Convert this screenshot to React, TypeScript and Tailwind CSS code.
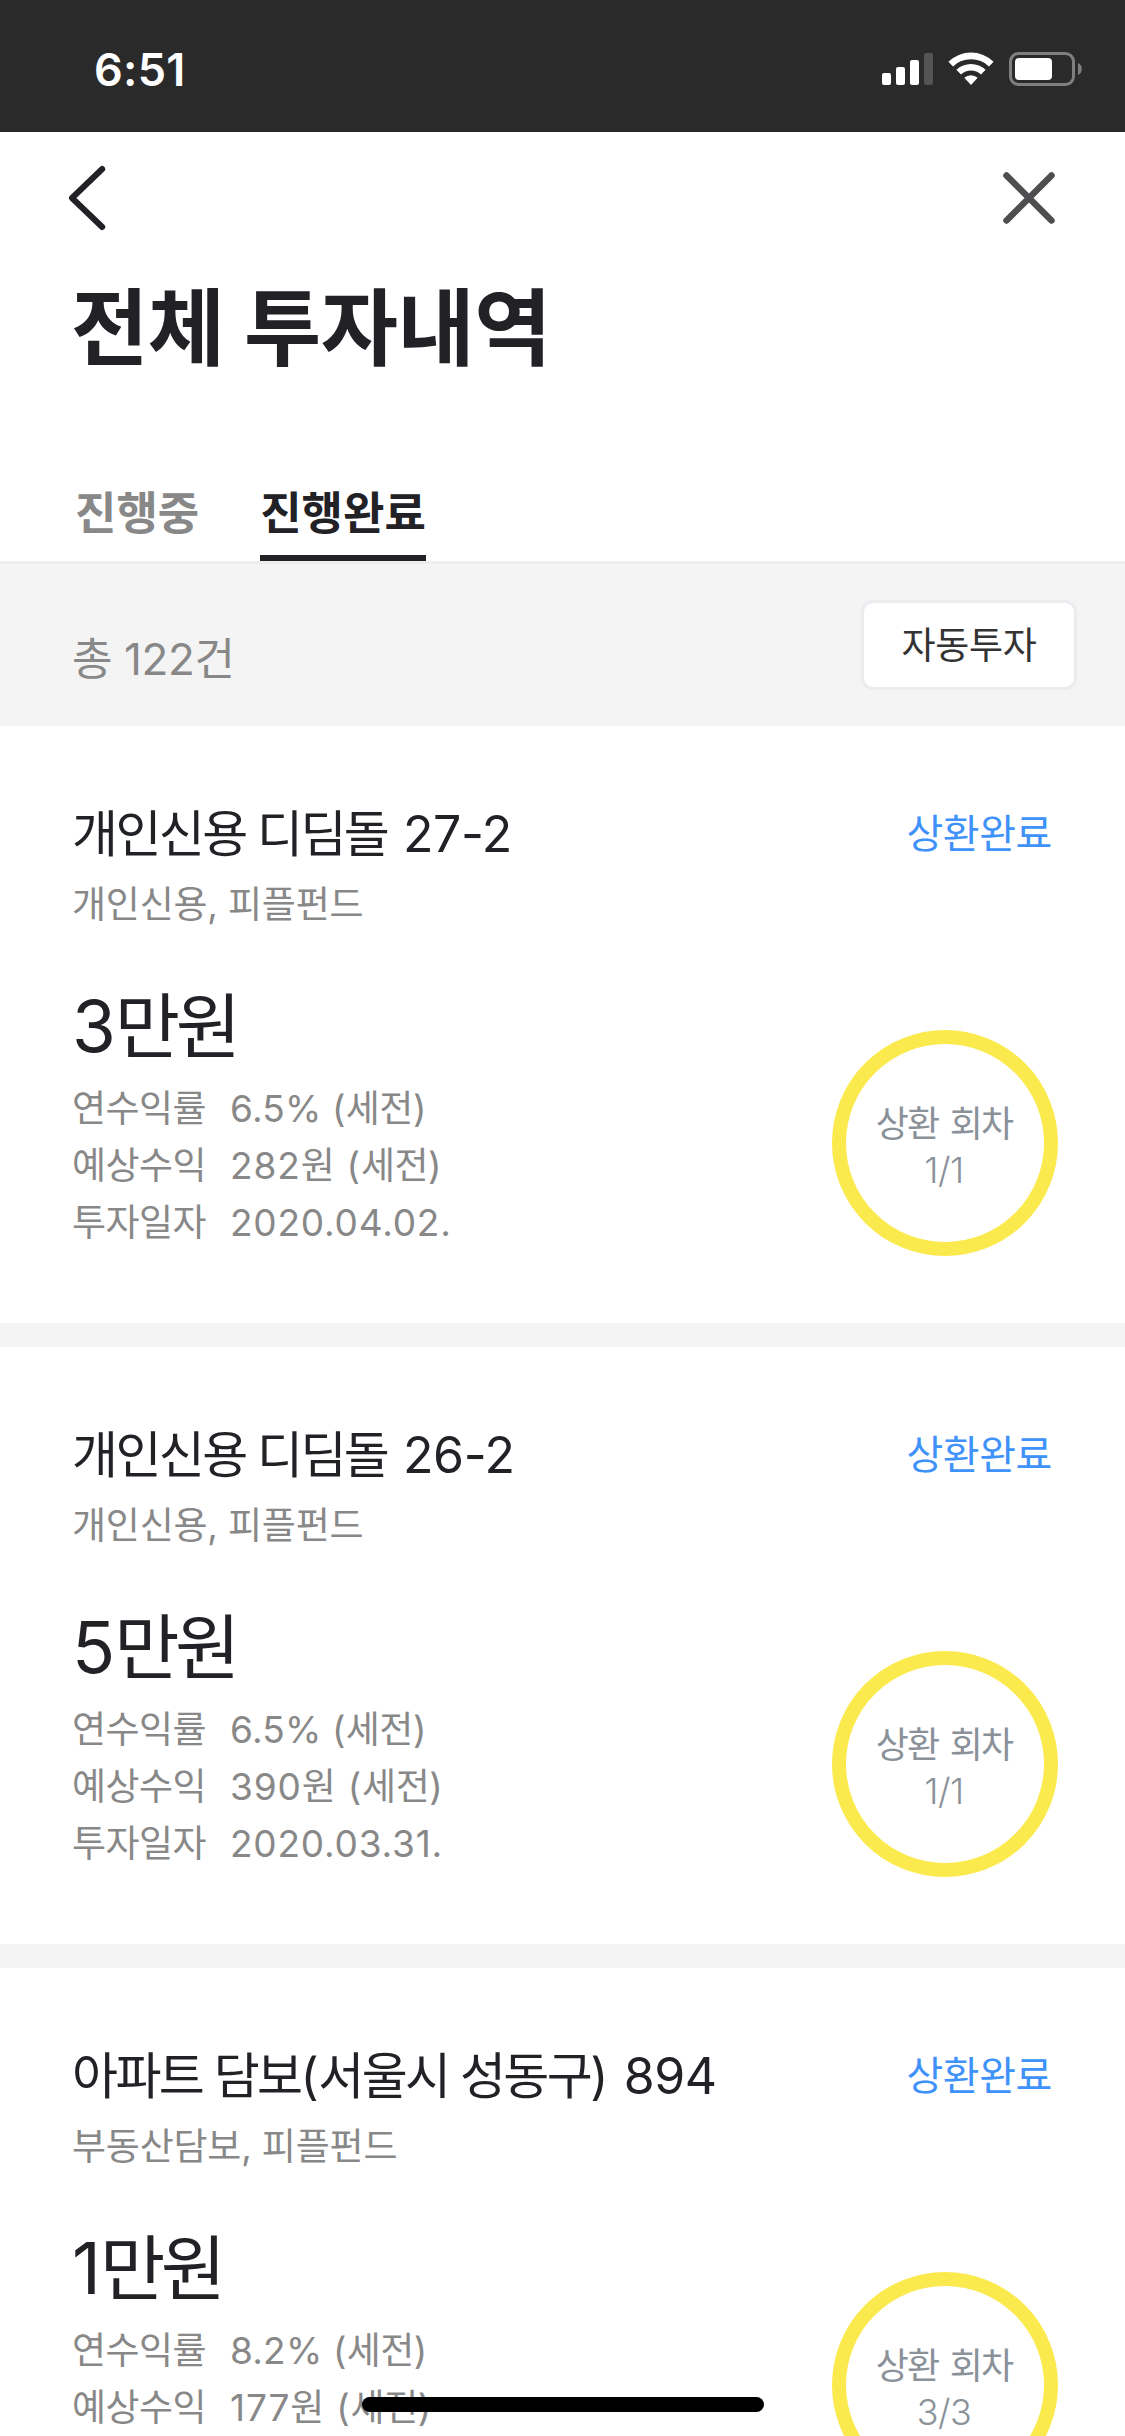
type Investment = {
  title: string;
  category: string;
  amount: string;
  rate: string;
  profit: string;
  date: string;
  round: string;
};

const investments: Investment[] = [
  {
    title: "개인신용 디딤돌 27-2",
    category: "개인신용, 피플펀드",
    amount: "3만원",
    rate: "6.5% (세전)",
    profit: "282원 (세전)",
    date: "2020.04.02.",
    round: "1/1",
  },
  {
    title: "개인신용 디딤돌 26-2",
    category: "개인신용, 피플펀드",
    amount: "5만원",
    rate: "6.5% (세전)",
    profit: "390원 (세전)",
    date: "2020.03.31.",
    round: "1/1",
  },
  {
    title: "아파트 담보(서울시 성동구) 894",
    category: "부동산담보, 피플펀드",
    amount: "1만원",
    rate: "8.2% (세전)",
    profit: "177원 (세전)",
    date: "2020.03.30.",
    round: "3/3",
  },
];

// hangul is set tighter than digits and punctuation
const MixedText = ({
  text,
  latinClass,
}: {
  text: string;
  latinClass: string;
}) => (
  <>
    {text.split(/( ?[\x21-\x7e]+)/).map((part, i) =>
      i % 2 === 1 ? (
        <span key={i} className={latinClass}>
          {part}
        </span>
      ) : (
        part
      )
    )}
  </>
);

const StatusBar = () => (
  <div className="h-[132px] shrink-0 bg-[#2a2a2a] flex justify-between items-start pl-[94px] pr-[42px] pt-[47px]">
    <span className="text-white text-[45px] leading-[46px] tracking-[0.3px] font-semibold">
      6:51
    </span>
    <svg
      className="-mt-px"
      width="202"
      height="46"
      viewBox="881 46 202 46"
      fill="#fff"
    >
      <rect x="882" y="73" width="9" height="12" rx="2" />
      <rect x="896" y="67" width="9" height="18" rx="2" />
      <rect x="910" y="60" width="9" height="25" rx="2" />
      <rect x="924" y="53" width="9" height="32" rx="2" fill="#545454" />
      <path d="M948.4 61.8a32.4 32.4 0 0 1 45.2 0l-4.6 4.6a26 26 0 0 0-36 0z" />
      <path d="M956.4 69.8a21 21 0 0 1 29.2 0l-4.6 4.7a14.6 14.6 0 0 0-20 0z" />
      <path d="M964.3 77.8a10.2 10.2 0 0 1 13.4 0l-6.7 7.2z" />
      <rect
        x="1010.5"
        y="53.5"
        width="63"
        height="31"
        rx="8"
        fill="none"
        stroke="#7f7f7f"
        strokeWidth="3"
      />
      <rect x="1015" y="58" width="37" height="22" rx="4" />
      <path d="M1078 63c5 1.500 5 10.500 0 12z" fill="#7f7f7f" />
    </svg>
  </div>
);

const NavBar = () => (
  <div className="h-[132px] flex items-center justify-between pl-[66px] pr-[67px]">
    <svg width="42" height="72" viewBox="66 162 42 72" fill="none">
      <path
        d="M102.200 169L72 198l30.200 29"
        stroke="#222126"
        strokeWidth="6"
        strokeLinecap="round"
        strokeLinejoin="round"
      />
    </svg>
    <svg width="58" height="58" viewBox="1000 169 58 58" fill="none">
      <path
        d="M1006.500 175.500l45 45M1051.500 175.500l-45 45"
        stroke="#4e4e51"
        strokeWidth="6.5"
        strokeLinecap="round"
      />
    </svg>
  </div>
);

const InvestmentCard = ({ item }: { item: Investment }) => (
  <article className="h-[597px] shrink-0 bg-white pl-[72px] pr-[67px] pt-[74px]">
    <div className="flex justify-between items-center h-[68px]">
      <h2 className="text-[50px] leading-[68px] tracking-[-2.6px]">
        <MixedText
          text={item.title}
          latinClass="tracking-[-0.4px] [word-spacing:2px]"
        />
      </h2>
      <span className="text-[40px] leading-[68px] tracking-[-0.4px] text-[#3e92fa] mr-[6px]">
        상환완료
      </span>
    </div>
    <p className="text-[37px] leading-[54px] mt-[10px] tracking-[-0.2px] text-[#888]">
      {item.category}
    </p>
    <div className="flex justify-between">
      <div className="pt-[49px]">
        <p className="text-[71px] leading-[90px] tracking-[-4.5px]">
          <MixedText text={item.amount} latinClass="tracking-[-1px]" />
        </p>
        <dl className="mt-[9px] grid grid-cols-[158px_auto] text-[37px] leading-[57px] tracking-[-0.5px] text-[#888]">
          <dt>연수익률</dt>
          <dd>
            <MixedText text={item.rate} latinClass="tracking-[0.2px]" />
          </dd>
          <dt>예상수익</dt>
          <dd>
            <MixedText
              text={item.profit}
              latinClass="tracking-[0.9px] [word-spacing:1px]"
            />
          </dd>
          <dt>투자일자</dt>
          <dd>
            <MixedText text={item.date} latinClass="tracking-[0.8px]" />
          </dd>
        </dl>
      </div>
      <div className="mt-[98px] pt-[7px] pr-[2px] size-[226px] rounded-full border-[14px] border-[#fbea4e] flex flex-col items-center justify-center text-[36px] leading-[46px] text-[#8a9199]">
        <span className="tracking-[-1.8px] [word-spacing:3px]">상환 회차</span>
        <span className="font-light tracking-[-0.5px]">{item.round}</span>
      </div>
    </div>
  </article>
);

const App = () => {
  return (
    <main className="relative w-[1125px] h-[2436px] overflow-hidden bg-white text-[#222126] flex flex-col whitespace-nowrap font-[Inter,'Noto_Sans_CJK_KR',sans-serif]">
      <StatusBar />
      <header className="h-[432px] shrink-0 border-b-[3px] border-[#eee] flex flex-col">
        <NavBar />
        <h1 className="pl-[71px] pt-[5px] text-[84px] leading-[120px] font-bold tracking-[-0.5px]">
          전체 투자내역
        </h1>
        <nav className="mt-auto pl-[75px] flex gap-[61px] text-[45px] leading-[66px] font-bold">
          <button className="text-[#888] h-[80px] flex items-start">
            진행중
          </button>
          <button className="h-[80px] flex items-start border-b-[6px] border-[#222126]">
            진행완료
          </button>
        </nav>
      </header>
      <section className="h-[162px] shrink-0 bg-[#f4f4f4] flex justify-between pl-[72px] pr-[48px] pt-[36px]">
        <p className="mt-[26px] text-[44px] leading-[66px] tracking-[-0.4px] text-[#888]">
          총 122건
        </p>
        <button className="w-[216px] h-[90px] rounded-[12px] border-[3px] border-[#ebebf0] bg-white text-[#333] text-[37px] leading-[54px] tracking-[-0.3px] pt-[2px]">
          자동투자
        </button>
      </section>
      <div className="flex flex-col gap-[24px] bg-[#f4f4f4]">
        {investments.map((item) => (
          <InvestmentCard key={item.title} item={item} />
        ))}
      </div>
      {/* home indicator */}
      <div className="absolute bottom-[24px] left-[362px] w-[402px] h-[15px] rounded-full bg-black"></div>
    </main>
  );
};
export default App;
